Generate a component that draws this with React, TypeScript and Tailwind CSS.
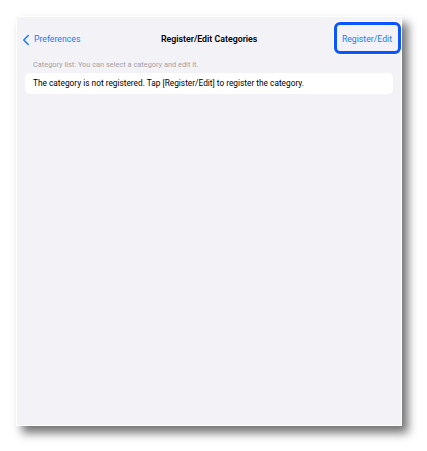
import { ChevronLeft } from 'lucide-react';

export default function App() {
  return (
    <div className="h-[451px] w-[427px] bg-white pl-4 pt-4" style={{ fontFamily: 'Roboto, "Noto Sans", sans-serif' }}>
      <div className="relative h-[410px] w-[386px] border border-white bg-[#f2f2f7] shadow-[6px_7px_9px_rgba(0,0,0,0.55)]">
        <header className="flex h-[44px] items-center justify-between pr-[9px] pt-[2px]">
          <div className="flex items-center text-[#1b7cf5]">
            <ChevronLeft size={18} strokeWidth={2} />
            <span className="-ml-px text-[8.7px]">Preferences</span>
          </div>
          <span className="-ml-[4px] text-[8.8px] font-semibold text-black">Register/Edit Categories</span>
          <span className="text-[8.7px] text-[#1b7cf5]">Register/Edit</span>
        </header>
        <p className="pl-4 text-[7.4px] leading-[8px] text-[#a2a2a8]">Category list: You can select a category and edit it.</p>
        <div className="mx-2 mt-[4px] flex h-[21px] items-center rounded-[5px] bg-white pl-2">
          <span className="text-[8.3px] text-black">The category is not registered. Tap [Register/Edit] to register the category.</span>
        </div>
        <div className="absolute left-[317px] top-[5px] h-[32px] w-[67px] rounded-[6px] border-[3.5px] border-[#0a55ff] ring-1 ring-white" />
      </div>
    </div>
  );
}
